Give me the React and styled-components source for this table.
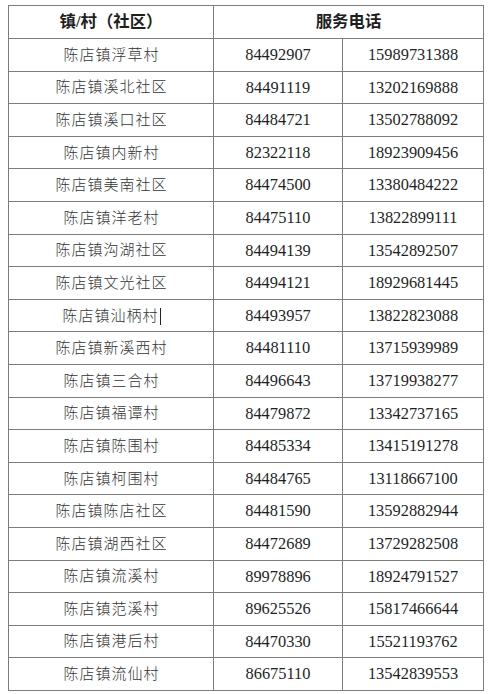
import React from "react";
import styled, { createGlobalStyle } from "styled-components";

const Global = createGlobalStyle`
  html, body { margin: 0; padding: 0; background: #fff; }
  body { width: 500px; height: 694px; overflow: hidden; }
`;

const Page = styled.div`
  padding: 5px 0 0 8px;
  font-family: "Liberation Serif", "Noto Sans CJK SC", serif;
  color: #1f1f1f;
`;

const Table = styled.div`
  display: grid;
  width: 476px;
  grid-template-columns: 205px 129px 141px;
  grid-template-rows: 33px;
  grid-auto-rows: 32.6px;
  border-left: 1px solid #7d7d7d;
  border-top: 1px solid #7d7d7d;
  box-sizing: border-box;
`;

const Cell = styled.div`
  display: flex;
  align-items: center;
  justify-content: center;
  box-sizing: border-box;
  border-right: 1px solid #7d7d7d;
  border-bottom: 1px solid #7d7d7d;
  font-size: 16.4px;
  line-height: 1;
  white-space: nowrap;
  grid-column: ${(p) => (p.$span ? `span ${p.$span}` : "auto")};
  font-weight: ${(p) => (p.$head ? 700 : 400)};
  padding-top: 1px;
`;

const Name = styled.span`
  font-size: 15px;
  letter-spacing: 1px;
  font-weight: 300;
  color: #333;
  padding-left: 1px;
`;

const Caret = styled.span`
  display: inline-block;
  width: 1px;
  height: 17px;
  background: #222;
  margin-left: 1px;
  vertical-align: middle;
`;

const rows = [
  ["陈店镇浮草村", "84492907", "15989731388"],
  ["陈店镇溪北社区", "84491119", "13202169888"],
  ["陈店镇溪口社区", "84484721", "13502788092"],
  ["陈店镇内新村", "82322118", "18923909456"],
  ["陈店镇美南社区", "84474500", "13380484222"],
  ["陈店镇洋老村", "84475110", "13822899111"],
  ["陈店镇沟湖社区", "84494139", "13542892507"],
  ["陈店镇文光社区", "84494121", "18929681445"],
  ["陈店镇汕柄村", "84493957", "13822823088", true],
  ["陈店镇新溪西村", "84481110", "13715939989"],
  ["陈店镇三合村", "84496643", "13719938277"],
  ["陈店镇福谭村", "84479872", "13342737165"],
  ["陈店镇陈围村", "84485334", "13415191278"],
  ["陈店镇柯围村", "84484765", "13118667100"],
  ["陈店镇陈店社区", "84481590", "13592882944"],
  ["陈店镇湖西社区", "84472689", "13729282508"],
  ["陈店镇流溪村", "89978896", "18924791527"],
  ["陈店镇范溪村", "89625526", "15817466644"],
  ["陈店镇港后村", "84470330", "15521193762"],
  ["陈店镇流仙村", "86675110", "13542839553"],
];

export default function App() {
  return (
    <>
      <Global />
      <Page>
        <Table>
          <Cell $head>镇/村（社区）</Cell>
          <Cell $head $span={2}>服务电话</Cell>
          {rows.map(([name, tel, mob, caret]) => (
            <React.Fragment key={name}>
              <Cell>
                <Name>{name}</Name>
                {caret && <Caret />}
              </Cell>
              <Cell>{tel}</Cell>
              <Cell>{mob}</Cell>
            </React.Fragment>
          ))}
        </Table>
      </Page>
    </>
  );
}
